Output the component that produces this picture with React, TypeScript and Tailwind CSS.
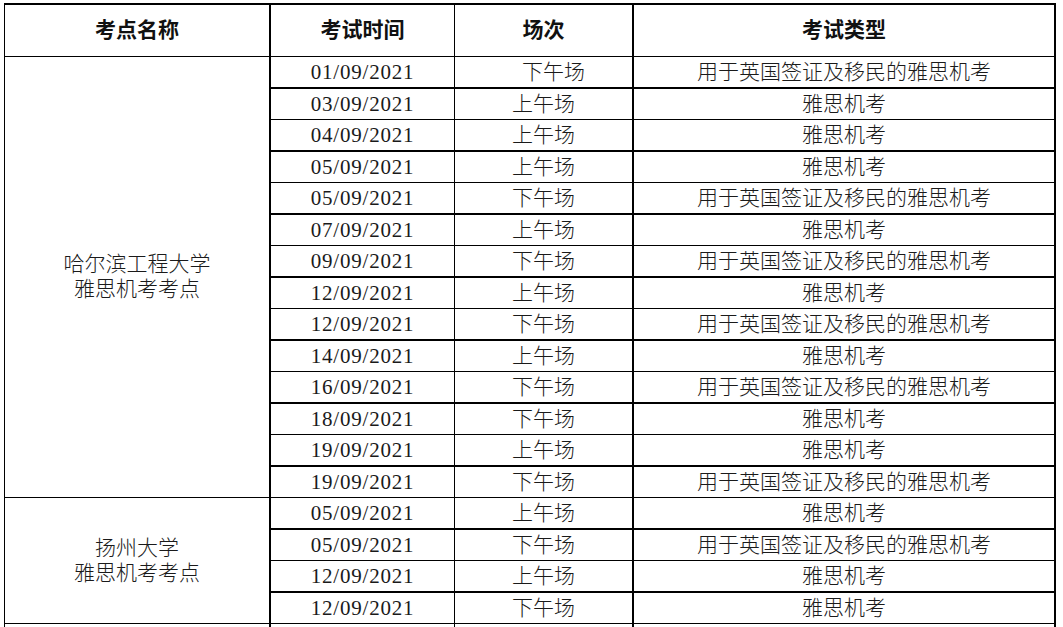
import React from "react";

type Row = { date: string; session: string; type: string; shift?: boolean };

const groups: { name: string[]; rows: Row[] }[] = [
  {
    name: ["哈尔滨工程大学", "雅思机考考点"],
    rows: [
      { date: "01/09/2021", session: "下午场", type: "用于英国签证及移民的雅思机考", shift: true },
      { date: "03/09/2021", session: "上午场", type: "雅思机考" },
      { date: "04/09/2021", session: "上午场", type: "雅思机考" },
      { date: "05/09/2021", session: "上午场", type: "雅思机考" },
      { date: "05/09/2021", session: "下午场", type: "用于英国签证及移民的雅思机考" },
      { date: "07/09/2021", session: "上午场", type: "雅思机考" },
      { date: "09/09/2021", session: "下午场", type: "用于英国签证及移民的雅思机考" },
      { date: "12/09/2021", session: "上午场", type: "雅思机考" },
      { date: "12/09/2021", session: "下午场", type: "用于英国签证及移民的雅思机考" },
      { date: "14/09/2021", session: "上午场", type: "雅思机考" },
      { date: "16/09/2021", session: "下午场", type: "用于英国签证及移民的雅思机考" },
      { date: "18/09/2021", session: "下午场", type: "雅思机考" },
      { date: "19/09/2021", session: "上午场", type: "雅思机考" },
      { date: "19/09/2021", session: "下午场", type: "用于英国签证及移民的雅思机考" },
    ],
  },
  {
    name: ["扬州大学", "雅思机考考点"],
    rows: [
      { date: "05/09/2021", session: "上午场", type: "雅思机考" },
      { date: "05/09/2021", session: "下午场", type: "用于英国签证及移民的雅思机考" },
      { date: "12/09/2021", session: "上午场", type: "雅思机考" },
      { date: "12/09/2021", session: "下午场", type: "雅思机考" },
    ],
  },
];

const font = "font-['Liberation_Serif','Noto_Sans_CJK_SC',serif]";

export default function App() {
  let idx = 0;
  return (
    <div className={`bg-white pl-[4px] pt-[3px] h-[627px] overflow-hidden text-black ${font}`}>
      <div className="grid w-fit grid-cols-[266px_184px_179px_422px] grid-rows-[52px_repeat(10,32px_31px)] border-t-2 border-l border-black">
        {["考点名称", "考试时间", "场次", "考试类型"].map((h, i) => (
          <div
            key={h}
            className={`flex items-center justify-center border-b border-black text-[21px] font-bold leading-none text-[#111] ${
              i === 1 ? "border-r" : "border-r-2"
            }`}
          >
            {h}
          </div>
        ))}
        {groups.map((g, gi) => {
          const cells = g.rows.map((r) => {
            const even = idx % 2 === 0;
            idx++;
            const b = even ? "border-b-2" : "border-b";
            return (
              <React.Fragment key={idx}>
                <div className={`flex items-center justify-center border-r border-black ${b} text-[21px] tracking-[0.8px] leading-none text-[#1a1a1a]`}>
                  {r.date}
                </div>
                <div
                  className={`flex items-center justify-center border-r-2 border-black ${b} text-[21px] font-light leading-none text-[#1a1a1a] ${
                    r.shift ? "pl-[20px]" : ""
                  }`}
                >
                  {r.session}
                </div>
                <div className={`flex items-center justify-center border-r-2 border-black ${b} text-[21px] font-light leading-none text-[#1a1a1a]`}>
                  {r.type}
                </div>
              </React.Fragment>
            );
          });
          return (
            <React.Fragment key={gi}>
              <div
                className={`flex flex-col items-center justify-center border-r-2 border-b border-black text-[21px] font-light leading-[25px] text-[#1a1a1a] ${
                  gi === 0 ? "row-span-14" : "row-span-4"
                }`}
              >
                {g.name.map((n) => (
                  <span key={n}>{n}</span>
                ))}
              </div>
              {cells}
            </React.Fragment>
          );
        })}
        <div className="border-r-2 border-b border-black" />
        <div className="border-r border-b-2 border-black" />
        <div className="border-r-2 border-b-2 border-black" />
        <div className="border-r-2 border-b-2 border-black" />
      </div>
    </div>
  );
}
